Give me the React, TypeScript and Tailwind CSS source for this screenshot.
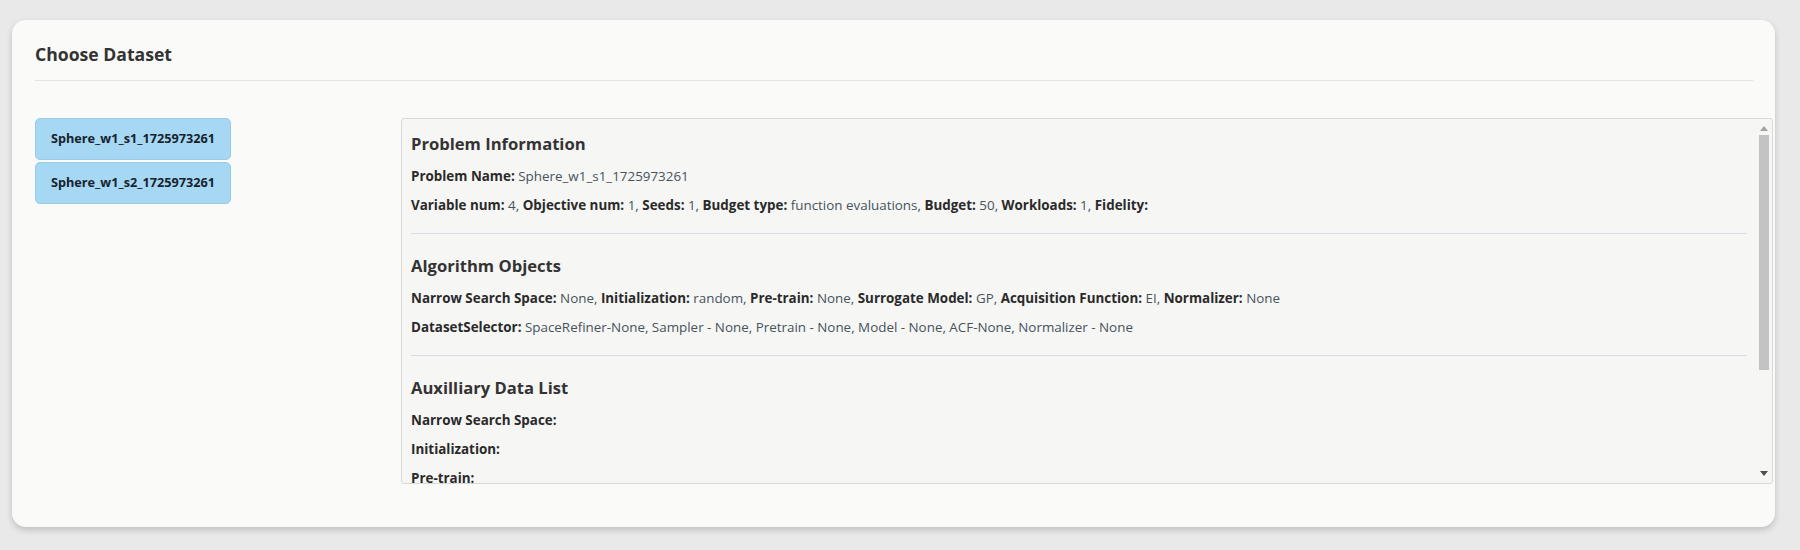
import React from 'react';

type Field = { label: string; value?: string };

const problemRows: Field[][] = [
  [{ label: 'Problem Name', value: 'Sphere_w1_s1_1725973261' }],
  [
    { label: 'Variable num', value: '4' },
    { label: 'Objective num', value: '1' },
    { label: 'Seeds', value: '1' },
    { label: 'Budget type', value: 'function evaluations' },
    { label: 'Budget', value: '50' },
    { label: 'Workloads', value: '1' },
    { label: 'Fidelity' },
  ],
];

const algorithmRows: Field[][] = [
  [
    { label: 'Narrow Search Space', value: 'None' },
    { label: 'Initialization', value: 'random' },
    { label: 'Pre-train', value: 'None' },
    { label: 'Surrogate Model', value: 'GP' },
    { label: 'Acquisition Function', value: 'EI' },
    { label: 'Normalizer', value: 'None' },
  ],
  [
    {
      label: 'DatasetSelector',
      value: 'SpaceRefiner-None, Sampler - None, Pretrain - None, Model - None, ACF-None, Normalizer - None',
    },
  ],
];

const auxRows: Field[][] = [
  [{ label: 'Narrow Search Space' }],
  [{ label: 'Initialization' }],
  [{ label: 'Pre-train' }],
];

const datasets = ['Sphere_w1_s1_1725973261', 'Sphere_w1_s2_1725973261'];

const Row: React.FC<{ fields: Field[] }> = ({ fields }) => (
  <div className="text-[13.4px] leading-[29px] whitespace-nowrap">
    {fields.map((f, i) => (
      <React.Fragment key={f.label}>
        <span className="font-bold text-[#2a2a2a]">{f.label}:</span>
        {f.value !== undefined && <span className="text-[#47525b]"> {f.value}</span>}
        {i < fields.length - 1 && <span className="text-[#47525b]">, </span>}
      </React.Fragment>
    ))}
  </div>
);

const Section: React.FC<{ title: string; rows: Field[][]; first?: boolean; last?: boolean }> = ({
  title,
  rows,
  first,
  last,
}) => (
  <div className={`${first ? 'pt-[14px]' : 'pt-[21px]'} ${last ? '' : 'pb-[13px] border-b border-[#dcdce2]'}`}>
    <h3 className="text-[16.6px] leading-[22px] font-bold text-[#333] mb-[7px]">{title}</h3>
    {rows.map((r, i) => (
      <Row key={i} fields={r} />
    ))}
  </div>
);

export default function App() {
  return (
    <div
      className="w-[1800px] h-[550px] bg-[#e9e9e9] pt-[20px] pl-[12px]"
      style={{ fontFamily: '"Open Sans", "Noto Sans", sans-serif' }}
    >
      <div className="w-[1763px] h-[507px] bg-[#fafaf9] rounded-[14px] shadow-[0_3px_6px_rgba(0,0,0,0.18)] pt-[23px] pl-[23px] pr-[2px]">
        <div className="mr-[20px] border-b border-[#e3e3e8] pb-[15px]">
          <h2 className="text-[17.6px] leading-[22px] font-bold text-[#333]">Choose Dataset</h2>
        </div>

        <div className="flex mt-[37px]">
          <div className="w-[366px] shrink-0 flex flex-col gap-[2px]">
            {datasets.map((d) => (
              <button
                key={d}
                className="w-[196px] h-[42px] rounded-[5px] bg-[#a7d8f3] border border-[#98cbe6] text-[12.7px] font-bold text-[#16232e] text-center"
              >
                {d}
              </button>
            ))}
          </div>

          <div className="flex-1 h-[366px] flex bg-[#f6f6f5] border border-[#d9d9d9] rounded-[3px] overflow-hidden">
            <div className="flex-1 pl-[9px] pr-[10px] overflow-hidden">
              <Section title="Problem Information" rows={problemRows} first />
              <Section title="Algorithm Objects" rows={algorithmRows} />
              <Section title="Auxilliary Data List" rows={auxRows} last />
            </div>
            <div className="w-[14px] shrink-0 flex flex-col items-center pt-[7px] pb-[7px] mr-[1px]">
              <svg width="8" height="5" viewBox="0 0 8 5" className="shrink-0">
                <path d="M0 5 L4 0 L8 5 Z" fill="#a3a3a3" />
              </svg>
              <div className="w-[10px] h-[235px] bg-[#c3c3c3] mt-[4px]" />
              <div className="flex-1" />
              <svg width="8" height="5" viewBox="0 0 8 5" className="shrink-0">
                <path d="M0 0 L8 0 L4 5 Z" fill="#4f4f4f" />
              </svg>
            </div>
          </div>
        </div>
      </div>
    </div>
  );
}
